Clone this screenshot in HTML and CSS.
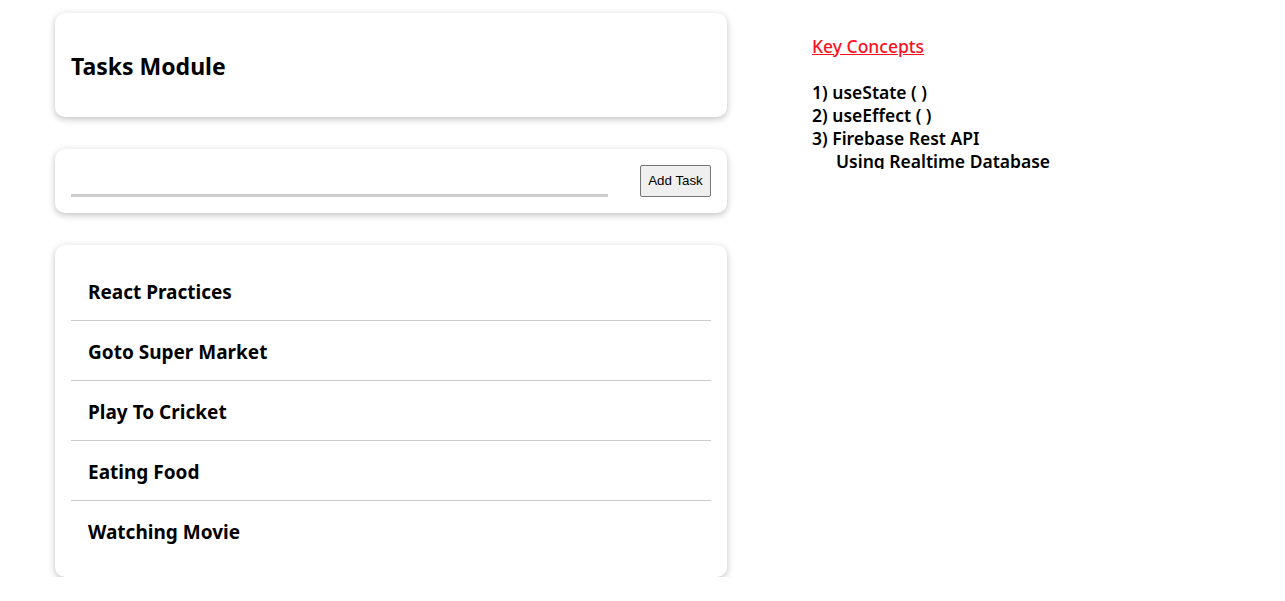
FILE: index.html
```html
<!DOCTYPE html>
<html>
<head>
<meta charset="utf-8">
<link rel="stylesheet" href="styles.css">
</head>
<body>
<div class="page">
  <div class="main">
    <div class="card header">
      <h2 class="title">Tasks Module</h2>
    </div>
    <div class="card form">
      <input class="task-input" type="text">
      <button class="add-btn">Add Task</button>
    </div>
    <div class="card list">
      <div class="item">React Practices</div>
      <div class="item">Goto Super Market</div>
      <div class="item">Play To Cricket</div>
      <div class="item">Eating Food</div>
      <div class="item">Watching Movie</div>
    </div>
  </div>
  <div class="side">
    <div class="side-title">Key Concepts</div>
    <div class="concepts">
      <div class="line">1) useState ( )</div>
      <div class="line">2) useEffect ( )</div>
      <div class="line">3) Firebase Rest API</div>
      <div class="line indent">Using Realtime Database</div>
    </div>
  </div>
</div>
</body>
</html>
```

FILE: styles.css
```css
html, body {
  margin: 0;
  padding: 0;
  background: #fff;
}
body {
  font-family: "Noto Sans", "Open Sans", sans-serif;
  color: #000;
}
.page {
  display: flex;
  align-items: flex-start;
  padding: 13px 0 0 55px;
}
.main {
  width: 672px;
  display: flex;
  flex-direction: column;
  gap: 32px;
}
.card {
  background: #fff;
  border-radius: 10px;
  box-shadow: 0 2px 7px rgba(0, 0, 0, 0.25);
  box-sizing: border-box;
  padding: 16px;
}
.header {
  height: 104px;
  display: flex;
  align-items: center;
  padding-top: 18px;
}
.title {
  margin: 0;
  font-size: 23px;
  font-weight: 700;
}
.form {
  height: 64px;
  display: flex;
  align-items: flex-end;
  justify-content: space-between;
}
.task-input {
  width: 537px;
  height: 30px;
  border: none;
  border-bottom: 3px solid #cccccc;
  outline: none;
  box-sizing: border-box;
  margin: 0;
  padding: 0;
}
.add-btn {
  font-family: "Liberation Sans", Arial, sans-serif;
  font-size: 13.33px;
  height: 32px;
  width: 71px;
  padding: 0 0 2px;
  background: #efefef;
  border: 1px solid #767676;
  border-radius: 2px;
  color: #000;
}
.list {
  display: flex;
  flex-direction: column;
}
.item {
  height: 60px;
  display: flex;
  align-items: center;
  padding-left: 17px;
  padding-top: 2px;
  font-size: 19px;
  font-weight: 700;
  border-bottom: 1px solid #cccccc;
  box-sizing: border-box;
}
.item:last-child {
  border-bottom: none;
}
.side {
  margin-left: 85px;
  padding-top: 22px;
  font-size: 17.5px;
  font-weight: 600;
}
.side-title {
  color: #ff1020;
  font-weight: 500;
  text-decoration: underline;
  line-height: 23px;
  margin-bottom: 23px;
}
.concepts {
  height: 88px;
  overflow: hidden;
}
.line {
  line-height: 23px;
}
.indent {
  padding-left: 24px;
}
```
